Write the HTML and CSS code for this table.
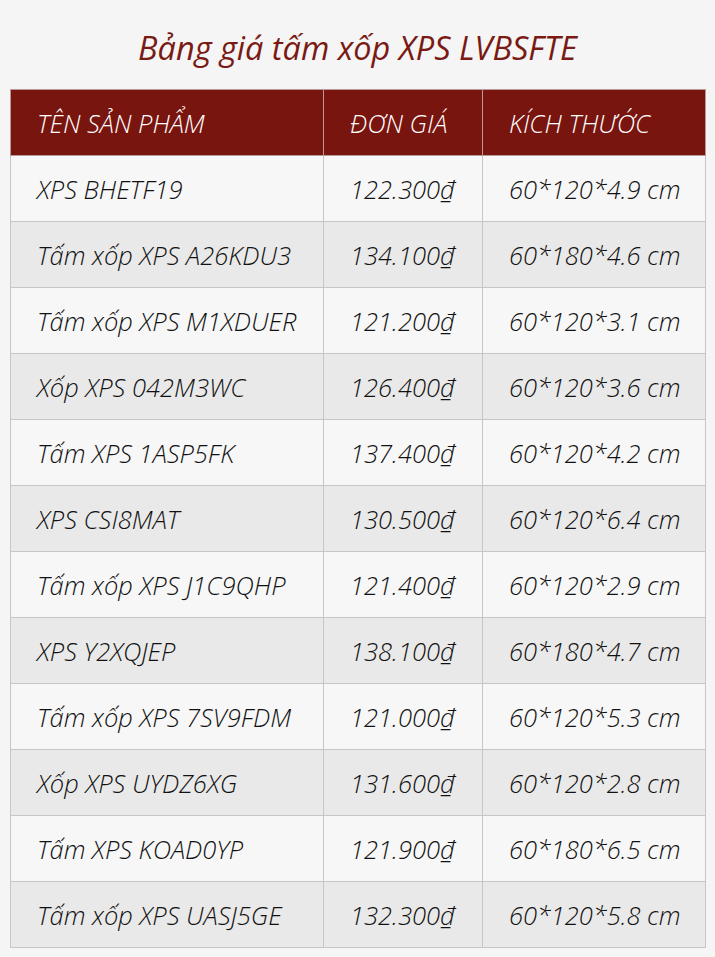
FILE: index.html
```html
<!DOCTYPE html>
<html lang="vi">
<head>
<meta charset="utf-8">
<title>Bảng giá tấm xốp XPS LVBSFTE</title>
<link rel="stylesheet" href="styles.css">
</head>
<body>
<h1 class="title">Bảng giá tấm xốp XPS LVBSFTE</h1>
<table class="price-table">
<thead>
<tr><th class="c1">TÊN SẢN PHẨM</th><th class="c2">ĐƠN GIÁ</th><th class="c3">KÍCH THƯỚC</th></tr>
</thead>
<tbody>
<tr><td>XPS BHETF19</td><td>122.300₫</td><td>60*120*4.9 cm</td></tr>
<tr><td>Tấm xốp XPS A26KDU3</td><td>134.100₫</td><td>60*180*4.6 cm</td></tr>
<tr><td>Tấm xốp XPS M1XDUER</td><td>121.200₫</td><td>60*120*3.1 cm</td></tr>
<tr><td>Xốp XPS 042M3WC</td><td>126.400₫</td><td>60*120*3.6 cm</td></tr>
<tr><td>Tấm XPS 1ASP5FK</td><td>137.400₫</td><td>60*120*4.2 cm</td></tr>
<tr><td>XPS CSI8MAT</td><td>130.500₫</td><td>60*120*6.4 cm</td></tr>
<tr><td>Tấm xốp XPS J1C9QHP</td><td>121.400₫</td><td>60*120*2.9 cm</td></tr>
<tr><td>XPS Y2XQJEP</td><td>138.100₫</td><td>60*180*4.7 cm</td></tr>
<tr><td>Tấm xốp XPS 7SV9FDM</td><td>121.000₫</td><td>60*120*5.3 cm</td></tr>
<tr><td>Xốp XPS UYDZ6XG</td><td>131.600₫</td><td>60*120*2.8 cm</td></tr>
<tr><td>Tấm XPS KOAD0YP</td><td>121.900₫</td><td>60*180*6.5 cm</td></tr>
<tr><td>Tấm xốp XPS UASJ5GE</td><td>132.300₫</td><td>60*120*5.8 cm</td></tr>
</tbody>
</table>
</body>
</html>
```
FILE: styles.css
```css
html, body {
  margin: 0;
  padding: 0;
  background: #f5f5f5;
}
body {
  padding: 0 10px;
  font-family: "Open Sans", "Noto Sans", sans-serif;
  font-style: italic;
  font-weight: 300;
}
.title {
  margin: 0;
  padding-top: 28px;
  height: 89px;
  box-sizing: border-box;
  text-align: center;
  font-size: 32.5px;
  line-height: 40px;
  font-weight: 400;
  color: #7a1a14;
}
.price-table {
  width: 695px;
  border-collapse: collapse;
  table-layout: fixed;
  font-size: 25.5px;
  color: #111;
}
.price-table th,
.price-table td {
  height: 66px;
  padding: 0 0 0 26px;
  box-sizing: border-box;
  text-align: left;
  border: 1px solid #c6c6c6;
  font-weight: 300;
  line-height: 32px;
  white-space: nowrap;
}
.price-table th {
  background: #79150f;
  color: #fff;
  border-color: #b89a98;
}
.c1 { width: 313px; }
.c2 { width: 159px; }
.c3 { width: 223px; }
.price-table tbody tr:nth-child(odd) td { background: #f7f7f7; }
.price-table tbody tr:nth-child(even) td { background: #e9e9e9; }
```
